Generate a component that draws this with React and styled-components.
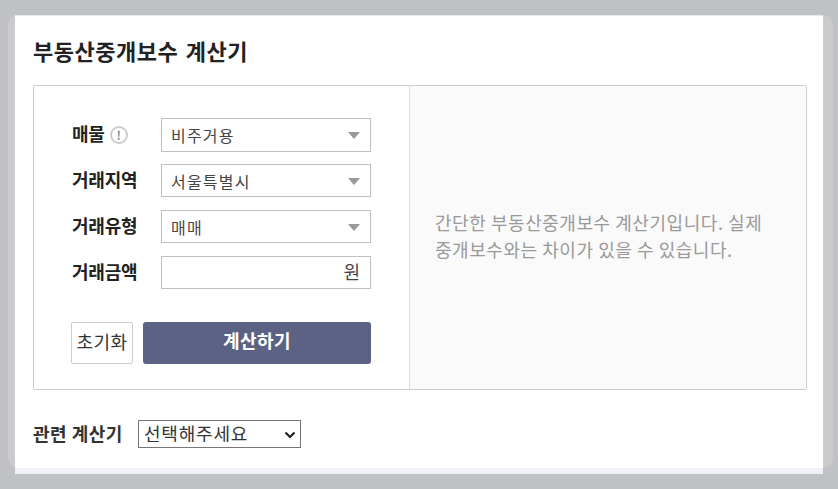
import React from 'react';
import styled, { createGlobalStyle } from 'styled-components';

const GlobalStyle = createGlobalStyle`
  html, body {
    margin: 0;
    background: #c0c1c5;
    font-family: "Noto Sans CJK KR", "Noto Sans", sans-serif;
  }
`;

const Page = styled.div`
  width: 838px;
  height: 489px;
  padding: 15px 5px 0 8px;
  box-sizing: border-box;
  overflow: hidden;
`;

const Backdrop = styled.div`
  height: 453px;
  background: #cbcbcb;
  border-radius: 10px;
  padding-left: 7px;
`;

const Sheet = styled.div`
  width: 808px;
  height: 459px;
  background: #eff1f6;
  border-top: 1px solid #e8e9f0;
  box-sizing: border-box;
`;

const Card = styled.div`
  height: 452px;
  background: #fff;
  padding: 0 16px 0 18px;
  box-sizing: border-box;
  display: flex;
  flex-direction: column;
`;

const Title = styled.h1`
  margin: 0;
  height: 69px;
  padding-top: 18px;
  box-sizing: border-box;
  font-size: 22px;
  line-height: 33px;
  font-weight: 700;
  letter-spacing: 0.5px;
  word-spacing: 2px;
  color: #222;
`;

const Calculator = styled.div`
  display: flex;
  width: 774px;
  height: 305px;
  border: 1px solid #ccc;
  border-radius: 2px;
  box-sizing: border-box;
`;

const FormPane = styled.div`
  width: 375px;
  padding: 32px 38px 0 37px;
  box-sizing: border-box;
  display: flex;
  flex-direction: column;
`;

const InfoPane = styled.div`
  flex: 1;
  background: #fafafa;
  border-left: 1px solid #ddd;
  padding: 0 25px 4px;
  display: flex;
  align-items: center;
  font-size: 18px;
  line-height: 27px;
  letter-spacing: 0.55px;
  color: #999;
`;

const Row = styled.div`
  display: flex;
  align-items: center;
  height: ${p => p.$h || 33}px;
  margin-bottom: ${p => (p.$h ? 12 : 13)}px;
`;

const Label = styled.label`
  width: 89px;
  margin-left: 1px;
  margin-top: -4px;
  display: flex;
  align-items: center;
  gap: 5px;
  font-size: 18px;
  font-weight: 700;
  letter-spacing: -0.2px;
  color: #222;
`;

const HelpIcon = styled.span`
  width: 18px;
  height: 18px;
  margin-top: 3px;
  border: 2px solid #ccc;
  border-radius: 50%;
  box-sizing: border-box;
  display: flex;
  align-items: center;
  justify-content: center;
  font-size: 12px;
  line-height: 1;
  font-weight: 700;
  color: #888;
`;

const Field = styled.div`
  position: relative;
  width: 210px;
  height: 100%;
  border: 1px solid #c0c0c0;
  box-sizing: border-box;
  display: flex;
  align-items: center;
  padding: 0 10px 0 9px;
  font-size: 16px;
  letter-spacing: 1.2px;
  color: #444;
  justify-content: ${p => (p.$right ? 'flex-end' : 'flex-start')};
`;

const Arrow = styled.span`
  position: absolute;
  right: 10px;
  top: 50%;
  margin-top: -3px;
  width: 0;
  height: 0;
  border-left: 6px solid transparent;
  border-right: 6px solid transparent;
  border-top: 7px solid #999;
`;

const Unit = styled.span`
  margin-top: -4px;
  font-size: 18px;
  letter-spacing: 0;
`;

const Actions = styled.div`
  display: flex;
  gap: 10px;
  margin-top: 20px;
`;

const ResetButton = styled.button`
  width: 62px;
  height: 42px;
  background: #fff;
  border: 1px solid #ccc;
  border-radius: 2px;
  padding: 0 0 4px;
  font-family: inherit;
  font-size: 18px;
  letter-spacing: 0.4px;
  color: #333;
`;

const SubmitButton = styled.button`
  width: 228px;
  height: 42px;
  background: #5c6283;
  border: none;
  border-radius: 3px;
  padding: 0 0 6px;
  font-family: inherit;
  font-size: 18px;
  font-weight: 700;
  letter-spacing: 0.5px;
  color: #fff;
`;

const Related = styled.div`
  display: flex;
  align-items: center;
  margin-top: 30px;
`;

const RelatedLabel = styled.span`
  width: 105px;
  margin-top: -3px;
  font-size: 18px;
  font-weight: 700;
  letter-spacing: 0.5px;
  color: #333;
`;

const SelectWrap = styled.div`
  position: relative;
  width: 163px;
  height: 28px;
`;

const RelatedSelect = styled.select`
  appearance: none;
  display: block;
  width: 100%;
  height: 100%;
  font-family: inherit;
  font-size: 18px;
  line-height: 24px;
  letter-spacing: 0.8px;
  color: #333;
  background: #fff;
  border: 1px solid #767676;
  border-radius: 0;
  padding: 0 0 5px 5px;
`;

const Chevron = styled.svg`
  position: absolute;
  right: 5px;
  top: 11px;
  pointer-events: none;
`;

const fields = [
  { label: '매물', value: '비주거용', help: true, h: 34 },
  { label: '거래지역', value: '서울특별시' },
  { label: '거래유형', value: '매매' },
];

export default function App() {
  return (
    <Page>
      <GlobalStyle />
      <Backdrop>
        <Sheet>
          <Card>
            <Title>부동산중개보수 계산기</Title>
            <Calculator>
              <FormPane>
                {fields.map(f => (
                  <Row key={f.label} $h={f.h}>
                    <Label>
                      {f.label}
                      {f.help && <HelpIcon>!</HelpIcon>}
                    </Label>
                    <Field>
                      {f.value}
                      <Arrow />
                    </Field>
                  </Row>
                ))}
                <Row>
                  <Label>거래금액</Label>
                  <Field $right>
                    <Unit>원</Unit>
                  </Field>
                </Row>
                <Actions>
                  <ResetButton>초기화</ResetButton>
                  <SubmitButton>계산하기</SubmitButton>
                </Actions>
              </FormPane>
              <InfoPane>
                간단한 부동산중개보수 계산기입니다. 실제
                <br />
                중개보수와는 차이가 있을 수 있습니다.
              </InfoPane>
            </Calculator>
            <Related>
              <RelatedLabel>관련 계산기</RelatedLabel>
              <SelectWrap>
                <RelatedSelect defaultValue="">
                  <option value="">선택해주세요</option>
                </RelatedSelect>
                <Chevron width="12" height="8" viewBox="0 0 12 8" fill="none">
                  <path d="M1.5 1.5 L6 6 L10.5 1.5" stroke="#222" strokeWidth="2.2" />
                </Chevron>
              </SelectWrap>
            </Related>
          </Card>
        </Sheet>
      </Backdrop>
    </Page>
  );
}
